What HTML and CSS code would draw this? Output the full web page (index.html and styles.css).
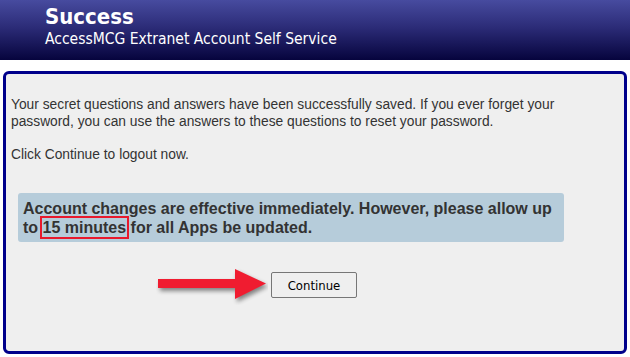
FILE: index.html
```html
<!DOCTYPE html>
<html>
<head>
<meta charset="utf-8">
<link rel="stylesheet" href="styles.css">
</head>
<body>
<header class="banner">
  <div class="banner-title">Success</div>
  <div class="banner-sub">AccessMCG Extranet Account Self Service</div>
</header>
<main class="panel">
  <p class="msg">Your secret questions and answers have been successfully saved. If you ever forget your password, you can use the answers to these questions to reset your password.</p>
  <p class="msg">Click Continue to logout now.</p>
  <div class="notice">Account changes are effective immediately. However, please allow up to <span class="hl">15 minutes</span> for all Apps be updated.</div>
  <div class="actions">
    <svg class="arrow" width="112" height="40" viewBox="0 0 112 40">
      <g class="arrow-shape">
        <rect x="2" y="14" width="80" height="9" fill="#f01c30"/>
        <polygon points="79,4 110,18.5 79,34" fill="#f01c30"/>
      </g>
    </svg>
    <button class="btn">Continue</button>
  </div>
</main>
</body>
</html>
```
FILE: styles.css
```css
html, body {
  margin: 0;
  padding: 0;
  background: #ffffff;
}
.banner {
  height: 60px;
  box-sizing: border-box;
  padding: 4px 0 0 45px;
  background: linear-gradient(to bottom, #474b9f 0%, #2c2c78 45%, #06043d 100%);
  color: #ffffff;
  font-family: "DejaVu Sans Condensed", "DejaVu Sans", sans-serif;
}
.banner-title {
  font-weight: bold;
  font-size: 22px;
  line-height: 26px;
}
.banner-sub {
  font-size: 15.5px;
  line-height: 18px;
}
.panel {
  margin: 11px 3px 0 3px;
  height: 283px;
  box-sizing: border-box;
  border: 3px solid #00008b;
  border-radius: 6px;
  background: #efefef;
  padding: 22px 5px 0 5px;
  font-family: "Liberation Sans", Arial, sans-serif;
  color: #333333;
}
.msg {
  margin: 0 0 16px 0;
  font-size: 13.8px;
  line-height: 17px;
  padding-right: 40px;
}
.notice {
  margin: 30px 55px 0 7px;
  background: #b6ccda;
  border-radius: 3px;
  padding: 6px 6px 5px 5px;
  font-weight: bold;
  font-size: 16px;
  line-height: 19px;
  color: #333333;
}
.hl {
  display: inline-block;
  line-height: 17px;
  outline: 2px solid #e8192c;
  outline-offset: 1px;
}
.actions {
  display: flex;
  align-items: center;
  padding: 23px 0 0 145px;
}
.arrow {
  display: block;
  margin-right: 3px;
}
.arrow-shape {
  filter: drop-shadow(2px 3px 2px rgba(0,0,0,0.45));
}
.btn {
  width: 86px;
  height: 26px;
  border: 1px solid #767676;
  border-radius: 2px;
  background: #efefef;
  font-family: "DejaVu Sans Condensed", "DejaVu Sans", sans-serif;
  font-size: 13px;
  color: #000000;
  padding: 0;
}
```
